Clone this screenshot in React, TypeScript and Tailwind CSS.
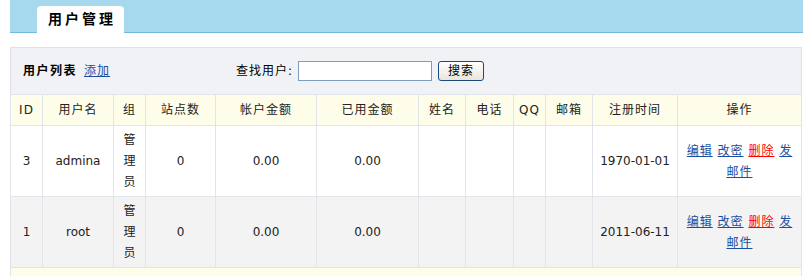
import React from "react";

const cols = [32, 71, 32, 70, 101, 102, 47, 48, 32, 47, 85, 124];
const headers = ["ID", "用户名", "组", "站点数", "帐户金额", "已用金额", "姓名", "电话", "QQ", "邮箱", "注册时间", "操作"];

const rows = [
  { id: "3", name: "admina", date: "1970-01-01", bg: "bg-white" },
  { id: "1", name: "root", date: "2011-06-11", bg: "bg-[#f3f3f3]" },
];

export default function App() {
  const font = { fontFamily: '"DejaVu Sans", "Noto Sans CJK SC", sans-serif' };
  const td = "border border-[#e1e4ea] px-[5px] pt-[4px] pb-[3px] text-center leading-[21px]";
  const link = "text-[#1a4ea0] underline tracking-[1px]";
  return (
    <div className="w-[803px] h-[276px] overflow-hidden bg-white text-[12px] text-[#222]" style={font}>
      <div className="ml-[10px] h-[33px] bg-[#a6d8ee] border-b border-[#72b9e1] flex items-end pl-[27px]">
        <div className="w-[87px] h-[27px] -mb-px bg-white rounded-t-[4px] flex items-center justify-center pl-[3px] text-[14px] font-bold tracking-[3px] text-black">
          用户管理
        </div>
      </div>
      <div className="ml-[10px] mt-[14px] w-[792px]">
        <div className="h-[47px] bg-[#f1f2f5] border-t border-x border-[#dfe1e5] flex items-center pl-[12px]">
          <div className="w-[213px] flex items-center">
            <span className="font-bold tracking-[1.5px] text-black">用户列表</span>
            <a href="#" className="ml-[7px] text-[#1a4ea0] underline tracking-[1px]">添加</a>
          </div>
          <span className="tracking-[1px] text-black">查找用户:</span>
          <input className="ml-[5px] w-[134px] h-[20px] bg-white border border-[#7f9db9] outline-none" />
          <button className="ml-[6px] w-[46px] h-[20px] border border-[#1c4a7e] rounded-[3px] bg-gradient-to-b from-white to-[#e9e6da] text-[12px] text-black tracking-[1px] leading-none">
            搜索
          </button>
        </div>
        <table className="w-[792px] table-fixed border-collapse">
          <colgroup>
            {cols.map((w, i) => (
              <col key={i} style={{ width: w }} />
            ))}
          </colgroup>
          <thead>
            <tr className="bg-[#fefde9]">
              {headers.map((h) => (
                <th key={h} className="border border-[#e1e4ea] px-[2px] py-0 leading-[30px] font-normal text-center tracking-[1px] text-[#222]">
                  {h}
                </th>
              ))}
            </tr>
          </thead>
          <tbody>
            {rows.map((r) => (
              <tr key={r.id} className={r.bg}>
                <td className={td}>{r.id}</td>
                <td className={td}>{r.name}</td>
                <td className={td}>管理员</td>
                <td className={td}>0</td>
                <td className={td}>0.00</td>
                <td className={td}>0.00</td>
                <td className={td}></td>
                <td className={td}></td>
                <td className={td}></td>
                <td className={td}></td>
                <td className={td}>{r.date}</td>
                <td className={`${td} leading-[20px] [word-spacing:1px]`}>
                  <a href="#" className={link}>编辑</a>{" "}
                  <a href="#" className={link}>改密</a>{" "}
                  <a href="#" className="text-[#ff0000] underline tracking-[1px]">删除</a>{" "}
                  <a href="#" className={link}>发</a>
                  <a href="#" className={link}>邮件</a>
                </td>
              </tr>
            ))}
          </tbody>
        </table>
        <div className="h-[20px] bg-[#fefde9] border-x border-[#e1e4ea]"></div>
      </div>
    </div>
  );
}
